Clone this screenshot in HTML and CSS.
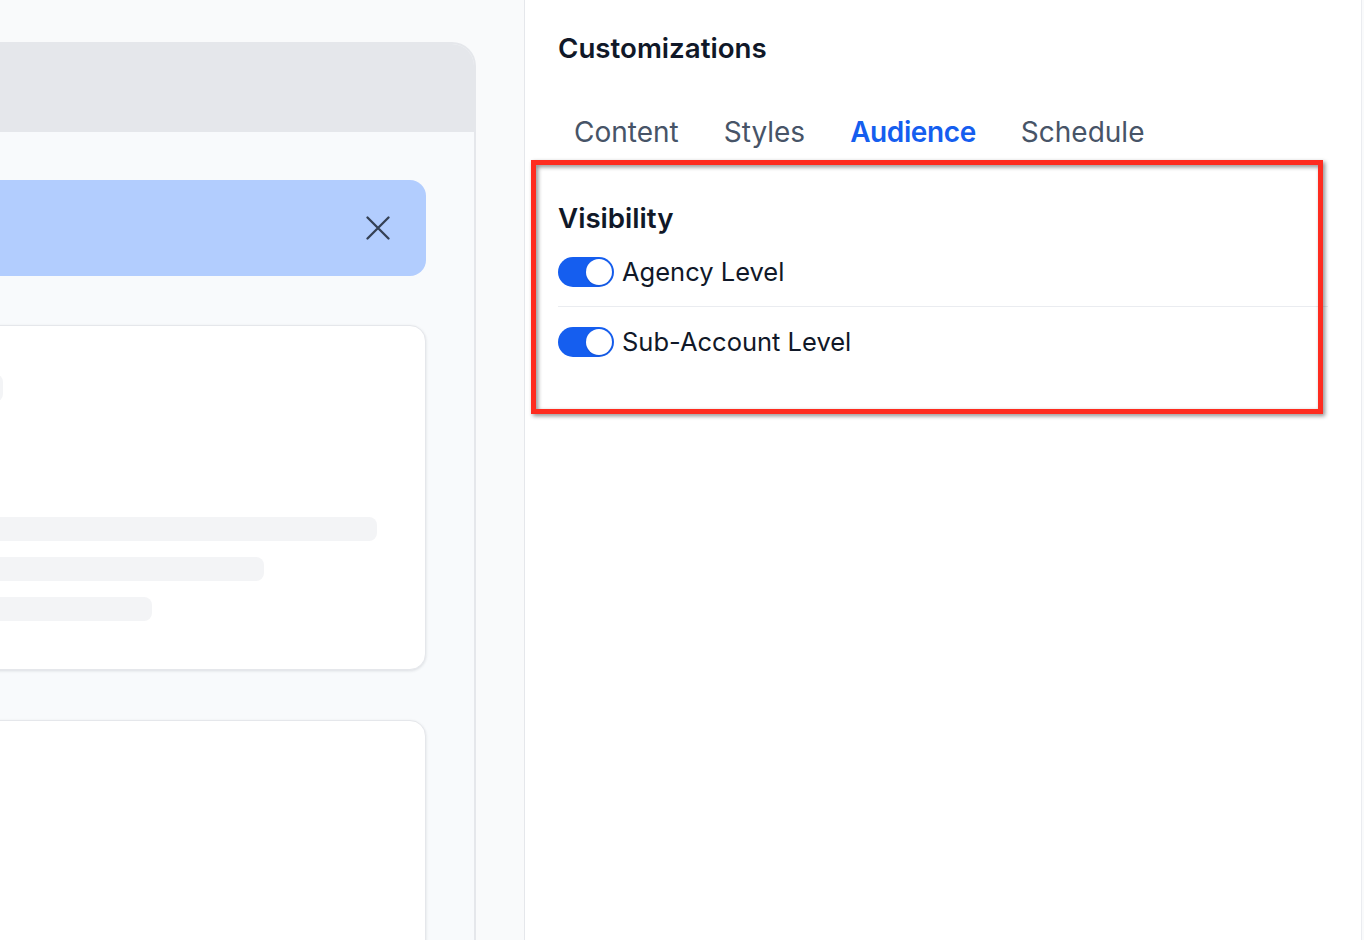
FILE: index.html
```html
<!DOCTYPE html>
<html>
<head>
    <meta charset="utf-8">
    <title>Customizations</title>
    <link rel="stylesheet" href="styles.css">
</head>
<body>
    <div class="app">
        <aside class="preview">
            <div class="frame">
                <div class="frame-head"></div>
                <div class="frame-body">
                    <div class="banner">
                        <button class="banner-close" aria-label="Close">
                            <svg width="24" height="24" viewBox="0 0 24 24" fill="none" stroke="#344054" stroke-width="2.3" stroke-linecap="round">
                                <path d="M1.5 1.5L22.5 22.5M22.5 1.5L1.5 22.5"/>
                            </svg>
                        </button>
                    </div>
                    <div class="card">
                        <div class="sk sk-title"></div>
                        <div class="sk sk-line sk-first"></div>
                        <div class="sk sk-line sk-mid"></div>
                        <div class="sk sk-line sk-short"></div>
                    </div>
                    <div class="card card-tall"></div>
                </div>
            </div>
        </aside>

        <section class="custom">
            <h2 class="custom-title">Customizations</h2>
            <nav class="tabs">
                <span class="tab">Content</span>
                <span class="tab">Styles</span>
                <span class="tab active">Audience</span>
                <span class="tab">Schedule</span>
            </nav>
            <div class="audience">
                <h3 class="section-title">Visibility</h3>
                <label class="toggle-row">
                    <span class="switch on"></span>
                    Agency Level
                </label>
                <label class="toggle-row">
                    <span class="switch on"></span>
                    Sub-Account Level
                </label>
            </div>
            <div class="callout"></div>
        </section>
    </div>
</body>
</html>
```

FILE: styles.css
```css
body {
    margin: 0;
    height: 940px;
    overflow: hidden;
    background: #f9fafb;
    font-family: Inter, 'Noto Sans', 'Liberation Sans', sans-serif;
    color: #101828;
}
.app {
    display: flex;
    height: 940px;
}

/* left preview */
.preview {
    width: 524px;
    flex: none;
    border-right: 1px solid #e5e7eb;
    background: #f9fafb;
    padding-top: 42px;
    overflow: hidden;
}
.frame {
    margin-left: -324px;
    width: 800px;
    box-sizing: border-box;
    min-height: 920px;
    border: 2px solid #e5e7eb;
    border-bottom: none;
    border-radius: 24px 24px 0 0;
    background: #f8fafc;
    overflow: hidden;
}
.frame-head {
    height: 88px;
    background: #e5e7eb;
}
.frame-body {
    padding: 48px;
}
.banner {
    height: 96px;
    border-radius: 16px;
    background: #b2cdfe;
    display: flex;
    justify-content: flex-end;
    align-items: center;
    padding-right: 36px;
}
.banner-close {
    border: none;
    background: none;
    padding: 0;
    width: 24px;
    height: 24px;
    display: flex;
}
.card {
    margin-top: 49px;
    background: white;
    border: 1px solid #e5e7eb;
    border-radius: 16px;
    padding: 48px;
    box-shadow: 0 1px 3px rgba(16, 24, 40, 0.12);
}
.card-tall {
    margin-top: 50px;
    height: 400px;
}
.sk {
    background: #f3f4f6;
    border-radius: 8px;
}
.sk-title {
    width: 228px;
    height: 28px;
}
.sk-line {
    height: 24px;
    margin-top: 16px;
}
.sk-first {
    margin-top: 115px;
    width: 602px;
}
.sk-mid {
    width: 489px;
}
.sk-short {
    width: 377px;
}

/* right panel */
.custom {
    position: relative;
    width: 837px;
    flex: none;
    box-sizing: border-box;
    background: white;
    border-right: 1px solid #eaecf0;
    padding: 32px 33px 0 33px;
}
.custom-title {
    margin: 0;
    font-size: 27.7px;
    line-height: 32px;
    font-weight: 600;
}
.tabs {
    display: flex;
    gap: 13px;
    margin-top: 40px;
}
.tab {
    padding: 12px 16px;
    font-size: 28px;
    line-height: 32px;
    color: #475467;
}
.tab.active {
    color: #155eef;
    font-weight: 600;
    letter-spacing: -0.4px;
}
.audience {
    padding-top: 42px;
}
.section-title {
    margin: 0 0 22px;
    font-size: 27.7px;
    line-height: 32px;
    font-weight: 600;
}
.toggle-row {
    display: flex;
    align-items: center;
    gap: 8px;
    font-size: 25.5px;
    line-height: 32px;
    color: #101828;
}
.toggle-row + .toggle-row {
    margin-top: 18px;
    padding-top: 19px;
    border-top: 1px solid #eaecf0;
}
.switch {
    position: relative;
    width: 56px;
    height: 30px;
    border-radius: 15px;
    background: #d0d5dd;
    flex: none;
}
.switch::after {
    content: "";
    position: absolute;
    top: 2px;
    left: 2px;
    width: 26px;
    height: 26px;
    border-radius: 50%;
    background: white;
    box-shadow: 0 1px 2px rgba(16, 24, 40, 0.12);
}
.switch.on {
    background: #155eef;
}
.switch.on::after {
    left: 28px;
}

/* annotation box */
.callout {
    position: absolute;
    left: 6px;
    top: 160px;
    width: 792px;
    height: 254px;
    box-sizing: border-box;
    border: 5px solid #fe2c1f;
    filter: drop-shadow(2px 2px 2px rgba(0, 0, 0, 0.45));
}
```
